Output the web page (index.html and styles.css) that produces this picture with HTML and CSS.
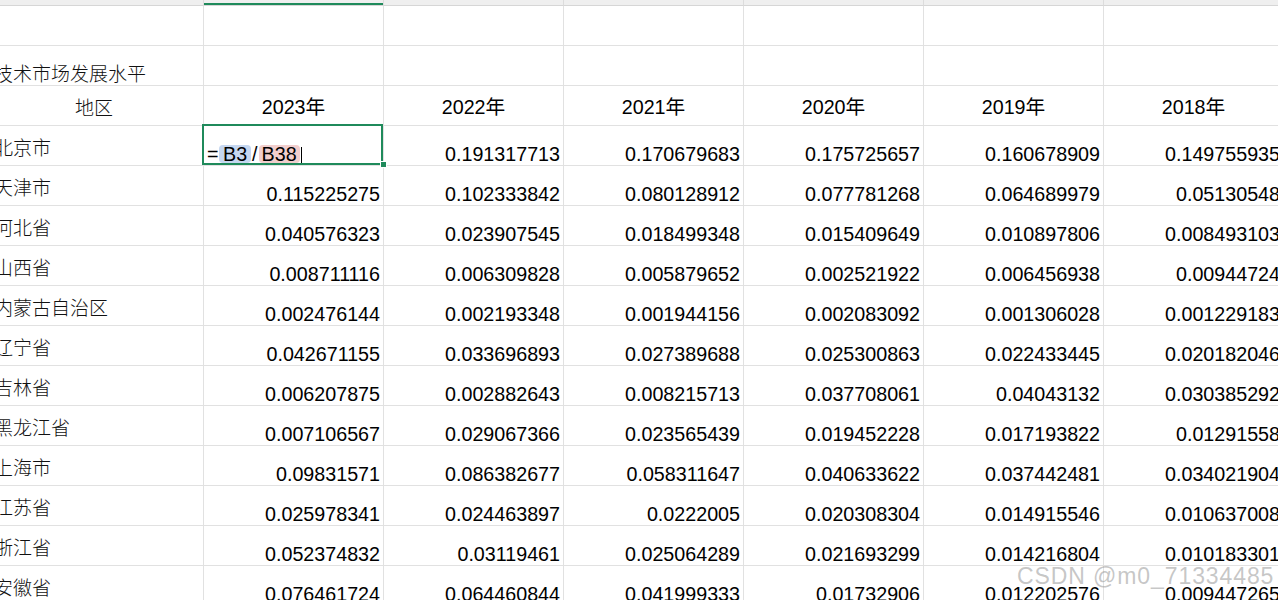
FILE: index.html
```html
<!DOCTYPE html>
<html lang="zh-CN">
<head>
<meta charset="utf-8">
<title>技术市场发展水平</title>
<link rel="stylesheet" href="styles.css">
</head>
<body>
<div class="sheet">
  <div class="colhead">
    <div class="ch"></div><div class="ch active"></div><div class="ch"></div><div class="ch"></div><div class="ch"></div><div class="ch"></div><div class="ch"></div>
  </div>
  <div class="grid">
    <div class="c"></div><div class="c"></div><div class="c"></div><div class="c"></div><div class="c"></div><div class="c"></div><div class="c"></div>

    <div class="c name title"><span>技术市场发展水平</span></div><div class="c"></div><div class="c"></div><div class="c"></div><div class="c"></div><div class="c"></div><div class="c"></div>

    <div class="c name head-a">地区</div><div class="c year">2023年</div><div class="c year">2022年</div><div class="c year">2021年</div><div class="c year">2020年</div><div class="c year">2019年</div><div class="c year">2018年</div>

    <div class="c name"><span>北京市</span></div>
    <div class="c edit"><span class="eq">=</span><span class="ref blue">B3</span><span class="sl">/</span><span class="ref pink">B38</span><span class="caret"></span></div>
    <div class="c num">0.191317713</div><div class="c num">0.170679683</div><div class="c num">0.175725657</div><div class="c num">0.160678909</div><div class="c num">0.149755935</div>

    <div class="c name"><span>天津市</span></div>
    <div class="c num">0.115225275</div><div class="c num">0.102333842</div><div class="c num">0.080128912</div><div class="c num">0.077781268</div><div class="c num">0.064689979</div><div class="c num">0.05130548</div>

    <div class="c name"><span>河北省</span></div>
    <div class="c num">0.040576323</div><div class="c num">0.023907545</div><div class="c num">0.018499348</div><div class="c num">0.015409649</div><div class="c num">0.010897806</div><div class="c num">0.008493103</div>

    <div class="c name"><span>山西省</span></div>
    <div class="c num">0.008711116</div><div class="c num">0.006309828</div><div class="c num">0.005879652</div><div class="c num">0.002521922</div><div class="c num">0.006456938</div><div class="c num">0.00944724</div>

    <div class="c name"><span>内蒙古自治区</span></div>
    <div class="c num">0.002476144</div><div class="c num">0.002193348</div><div class="c num">0.001944156</div><div class="c num">0.002083092</div><div class="c num">0.001306028</div><div class="c num">0.001229183</div>

    <div class="c name"><span>辽宁省</span></div>
    <div class="c num">0.042671155</div><div class="c num">0.033696893</div><div class="c num">0.027389688</div><div class="c num">0.025300863</div><div class="c num">0.022433445</div><div class="c num">0.020182046</div>

    <div class="c name"><span>吉林省</span></div>
    <div class="c num">0.006207875</div><div class="c num">0.002882643</div><div class="c num">0.008215713</div><div class="c num">0.037708061</div><div class="c num">0.04043132</div><div class="c num">0.030385292</div>

    <div class="c name"><span>黑龙江省</span></div>
    <div class="c num">0.007106567</div><div class="c num">0.029067366</div><div class="c num">0.023565439</div><div class="c num">0.019452228</div><div class="c num">0.017193822</div><div class="c num">0.01291558</div>

    <div class="c name"><span>上海市</span></div>
    <div class="c num">0.09831571</div><div class="c num">0.086382677</div><div class="c num">0.058311647</div><div class="c num">0.040633622</div><div class="c num">0.037442481</div><div class="c num">0.034021904</div>

    <div class="c name"><span>江苏省</span></div>
    <div class="c num">0.025978341</div><div class="c num">0.024463897</div><div class="c num">0.0222005</div><div class="c num">0.020308304</div><div class="c num">0.014915546</div><div class="c num">0.010637008</div>

    <div class="c name"><span>浙江省</span></div>
    <div class="c num">0.052374832</div><div class="c num">0.03119461</div><div class="c num">0.025064289</div><div class="c num">0.021693299</div><div class="c num">0.014216804</div><div class="c num">0.010183301</div>

    <div class="c name"><span>安徽省</span></div>
    <div class="c num">0.076461724</div><div class="c num">0.064460844</div><div class="c num">0.041999333</div><div class="c num">0.01732906</div><div class="c num">0.012202576</div><div class="c num">0.009447265</div>
  </div>
  <div class="watermark">CSDN @m0_71334485</div>
</div>
</body>
</html>
```
FILE: styles.css
```css
html, body {
  margin: 0;
  padding: 0;
  background: #ffffff;
  overflow: hidden;
}

.sheet {
  position: relative;
  width: 1278px;
  height: 600px;
  overflow: hidden;
}

.colhead {
  display: grid;
  grid-template-columns: 204px repeat(6, 180px);
  width: 1284px;
  height: 6px;
}

.ch {
  box-sizing: border-box;
  background: #efefef;
  border-right: 1px solid #dcdcdc;
  border-bottom: 1px solid #d6d6d6;
}

.ch.active {
  box-shadow: inset 0 -2px 0 #1f8a5b;
}

.grid {
  display: grid;
  grid-template-columns: 204px repeat(6, 180px);
  grid-auto-rows: 40px;
  width: 1284px;
}

.c {
  box-sizing: border-box;
  border-right: 1px solid #e1e1e1;
  border-bottom: 1px solid #e1e1e1;
  display: flex;
  white-space: nowrap;
  overflow: visible;
  color: #000;
}

.name {
  font-family: "Noto Sans CJK SC", sans-serif;
  font-weight: 300;
  font-size: 19px;
  line-height: 22px;
  align-items: center;
  padding-top: 3px;
  color: #111;
}

.name span {
  margin-left: -6px;
}

.name.title {
  align-items: flex-end;
  padding-top: 0;
  padding-bottom: 1px;
}

.name.head-a {
  justify-content: center;
  padding-right: 15px;
}

.year {
  font-family: "Liberation Sans", "Noto Sans CJK SC", sans-serif;
  font-size: 19.7px;
  line-height: 22px;
  justify-content: center;
  align-items: center;
  padding-top: 3px;
}

.num {
  font-family: "Liberation Sans", Arial, sans-serif;
  font-size: 19.7px;
  line-height: 22px;
  justify-content: flex-end;
  align-items: flex-end;
  padding-right: 3px;
}

.edit {
  position: relative;
  z-index: 2;
  font-family: "Liberation Sans", Arial, sans-serif;
  font-size: 19.7px;
  line-height: 22px;
  align-items: flex-end;
  padding-left: 3px;
  padding-bottom: 0;
}

.edit::after {
  content: "";
  position: absolute;
  top: -2px;
  left: -2px;
  right: 0;
  bottom: 0;
  border: 2px solid #1f8a5b;
}

.edit::before {
  content: "";
  position: absolute;
  left: 177px;
  top: 36px;
  width: 5px;
  height: 5px;
  background: #1f8a5b;
  outline: 1px solid #ffffff;
  z-index: 3;
}

.edit .ref {
  display: inline-block;
  border-radius: 4px;
  height: 18px;
  line-height: 18px;
  margin-bottom: 2px;
}

.edit .eq {
  width: 12px;
}

.edit .blue {
  background: #c6d7f0;
  padding: 0 4px 0 4px;
}

.edit .pink {
  background: #f2cecd;
  padding: 0 3px 0 3px;
}

.edit .sl {
  padding: 0 1px 0 1px;
}

.edit .caret {
  display: inline-block;
  width: 1px;
  height: 16px;
  background: #000;
  margin-left: 1px;
  margin-bottom: 2px;
}

.watermark {
  position: absolute;
  left: 1017px;
  top: 563px;
  font-family: "Liberation Sans", Arial, sans-serif;
  font-size: 23px;
  letter-spacing: 0.9px;
  line-height: 26px;
  color: rgba(150, 150, 150, 0.55);
  z-index: 5;
  white-space: nowrap;
}
```
